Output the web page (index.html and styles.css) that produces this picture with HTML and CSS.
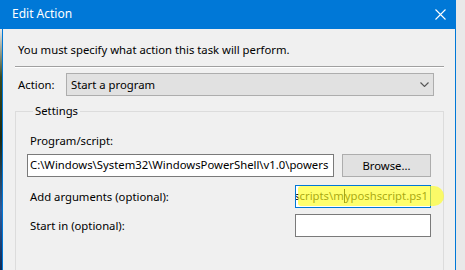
FILE: index.html
```html
<!DOCTYPE html>
<html lang="en">
<head>
    <meta charset="UTF-8">
    <title>Edit Action</title>
    <link rel="stylesheet" href="styles.css">
</head>
<body>
    <div class="titlebar">
        <span class="title">Edit Action</span>
        <svg class="close" width="11" height="11" viewBox="0 0 11 11">
            <path d="M0.5 0.5 L10.5 10.5 M10.5 0.5 L0.5 10.5" stroke="#fff" stroke-width="1.1"/>
        </svg>
    </div>

    <div class="frame">
        <div class="desktop"></div>
        <div class="dialog">
            <p class="intro">You must specify what action this task will perform.</p>
            <div class="separator"></div>

            <div class="action-row">
                <span class="label">Action:</span>
                <div class="combo">
                    <span>Start a program</span>
                    <svg width="9" height="5" viewBox="0 0 9 5">
                        <path d="M0.5 0.5 L4.5 4.5 L8.5 0.5" fill="none" stroke="#555" stroke-width="1.1"/>
                    </svg>
                </div>
            </div>

            <fieldset class="group">
                <legend>Settings</legend>

                <div class="label indent">Program/script:</div>
                <div class="program-row">
                    <div class="field wide">C:\Windows\System32\WindowsPowerShell\v1.0\powers</div>
                    <div class="button">Browse...</div>
                </div>

                <div class="row args">
                    <span class="label indent">Add arguments (optional):</span>
                    <div class="field narrow focused">
                        <span class="scroll">scripts\m<span class="caret"></span>yposhscript.ps1</span>
                    </div>
                    <div class="marker"></div>
                </div>

                <div class="row">
                    <span class="label indent">Start in (optional):</span>
                    <div class="field narrow"></div>
                </div>
            </fieldset>
        </div>
        <div class="shadow"></div>
    </div>
</body>
</html>
```

FILE: styles.css
```css
* {
    margin: 0;
    padding: 0;
    box-sizing: border-box;
}

body {
    width: 465px;
    height: 270px;
    overflow: hidden;
    font-family: 'Noto Sans', 'Open Sans', sans-serif;
    font-size: 11.3px;
    line-height: 16px;
    color: #000;
    background: #e9e9e9;
}

.titlebar {
    width: 456px;
    height: 29px;
    background: #0078d7;
    color: white;
    display: flex;
    align-items: center;
    justify-content: space-between;
    padding: 0 10px 1px 12px;
}

.title {
    font-size: 12px;
}

.close {
    margin-top: 1px;
}

.frame {
    display: flex;
    height: 241px;
}

.desktop {
    width: 2px;
    background: linear-gradient(#e8e8e8 0%, #3a4a22 20%, #1d2a12 45%, #2e5a9a 75%, #0f2a55 100%);
}

.dialog {
    width: 454px;
    background: #f0f0f0;
    border-left: 1px solid #0078d7;
    border-right: 1px solid #0078d7;
    padding: 0 11px 0 12px;
}

.shadow {
    flex: 1;
    background: #e9e9e9;
}

.intro {
    margin: 13px 0 0 3px;
}

.separator {
    margin-top: 8px;
    border-top: 1px solid #a0a0a0;
    border-bottom: 1px solid #fff;
}

.action-row {
    display: flex;
    align-items: center;
    margin-top: 5px;
    padding-left: 3px;
}

.action-row .label {
    width: 48px;
    margin-top: 1px;
}

.combo {
    width: 368px;
    height: 23px;
    background: #e1e1e1;
    border: 1px solid #adadad;
    display: flex;
    align-items: center;
    justify-content: space-between;
    padding: 0 4px 0 4px;
}

.group {
    margin-top: 7px;
    border: 1px solid #dcdcdc;
    padding: 14px 12px 40px 11px;
    min-width: 0;
}

.group legend {
    margin-left: 6px;
    padding: 0 2px;
}

.indent {
    margin-left: 3px;
}

.program-row {
    display: flex;
    align-items: center;
    gap: 8px;
    margin-top: 5px;
}

.field {
    height: 23px;
    background: white;
    border: 1px solid #7a7a7a;
    padding: 2px 2px 0 2px;
    white-space: nowrap;
    overflow: hidden;
}

.wide {
    width: 307px;
}

.narrow {
    width: 136px;
}

.focused {
    border-color: #0078d7;
    display: flex;
    justify-content: flex-end;
}

.caret {
    display: inline-block;
    width: 1px;
    height: 14px;
    background: #000;
    vertical-align: -3px;
}

.button {
    width: 89px;
    height: 23px;
    background: #e1e1e1;
    border: 1px solid #adadad;
    text-align: center;
    padding-top: 3px;
}

.row {
    display: flex;
    align-items: center;
    justify-content: space-between;
    margin-top: 6px;
    position: relative;
}

.args {
    margin-top: 8px;
}

.marker {
    position: absolute;
    left: 271px;
    top: 1px;
    width: 146px;
    height: 20px;
    background: rgba(255, 255, 30, 0.65);
    border-radius: 3px 10px 10px 3px;
}
```
